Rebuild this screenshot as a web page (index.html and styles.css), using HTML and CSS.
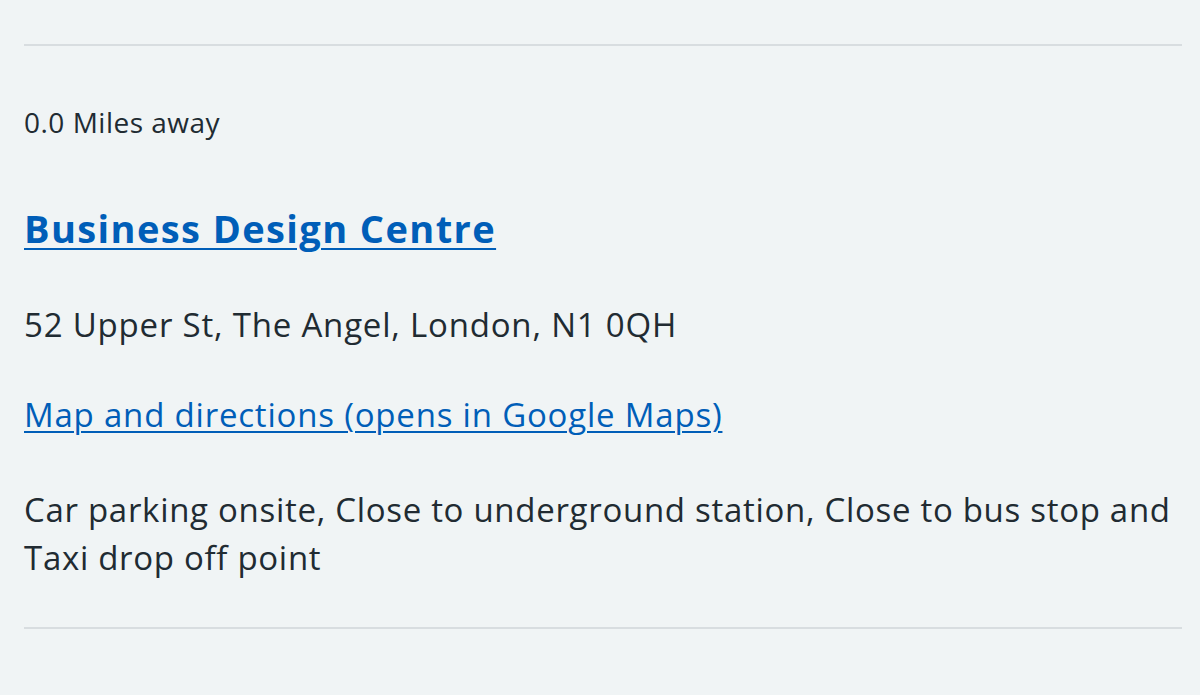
FILE: index.html
```html
<!DOCTYPE html>
<html lang="en">
<head>
<meta charset="utf-8">
<title>Business Design Centre</title>
<link rel="stylesheet" href="styles.css">
</head>
<body>
<main class="page">
  <hr class="rule rule-top">
  <section class="venue">
    <p class="distance">0.0 Miles away</p>
    <h2 class="venue-name"><a href="#">Business Design Centre</a></h2>
    <p class="address">52 Upper St, The Angel, London, N1 0QH</p>
    <p class="map"><a href="#">Map and directions (opens in Google Maps)</a></p>
    <p class="facilities">Car parking onsite, Close to underground station, Close to bus stop and Taxi drop off point</p>
  </section>
  <hr class="rule rule-bottom">
</main>
</body>
</html>
```
FILE: styles.css
```css
html, body {
  margin: 0;
  padding: 0;
  background: #f0f4f5;
}
body {
  font-family: "Open Sans", "Noto Sans", sans-serif;
  color: #212b32;
  height: 695px;
  overflow: hidden;
}
.page {
  padding: 0 18px 0 24px;
}
.rule {
  border: 0;
  height: 2px;
  background: #d8dde0;
  margin: 0;
}
.rule-top {
  margin-top: 44px;
}
.venue {
  display: flex;
  flex-direction: column;
}
.venue p, .venue h2 {
  margin: 0;
}
.distance {
  font-size: 28px;
  line-height: 40px;
  letter-spacing: 0.5px;
  margin-top: 56px !important;
}
.venue-name {
  font-size: 38px;
  line-height: 48px;
  font-weight: 700;
  letter-spacing: 1.4px;
  margin-top: 62px !important;
}
.venue a {
  color: #005eb8;
  text-decoration: underline;
  text-decoration-thickness: 2px;
  text-underline-offset: 5px;
}
.address {
  font-size: 33px;
  line-height: 48px;
  letter-spacing: 0.8px;
  margin-top: 49px !important;
}
.map {
  font-size: 33px;
  line-height: 48px;
  letter-spacing: 0.8px;
  margin-top: 42px !important;
}
.map a {
  text-underline-offset: 4px;
}
.facilities {
  font-size: 33px;
  line-height: 48px;
  letter-spacing: 0.7px;
  margin-top: 47px !important;
}
.rule-bottom {
  margin-top: 45px;
}
```
